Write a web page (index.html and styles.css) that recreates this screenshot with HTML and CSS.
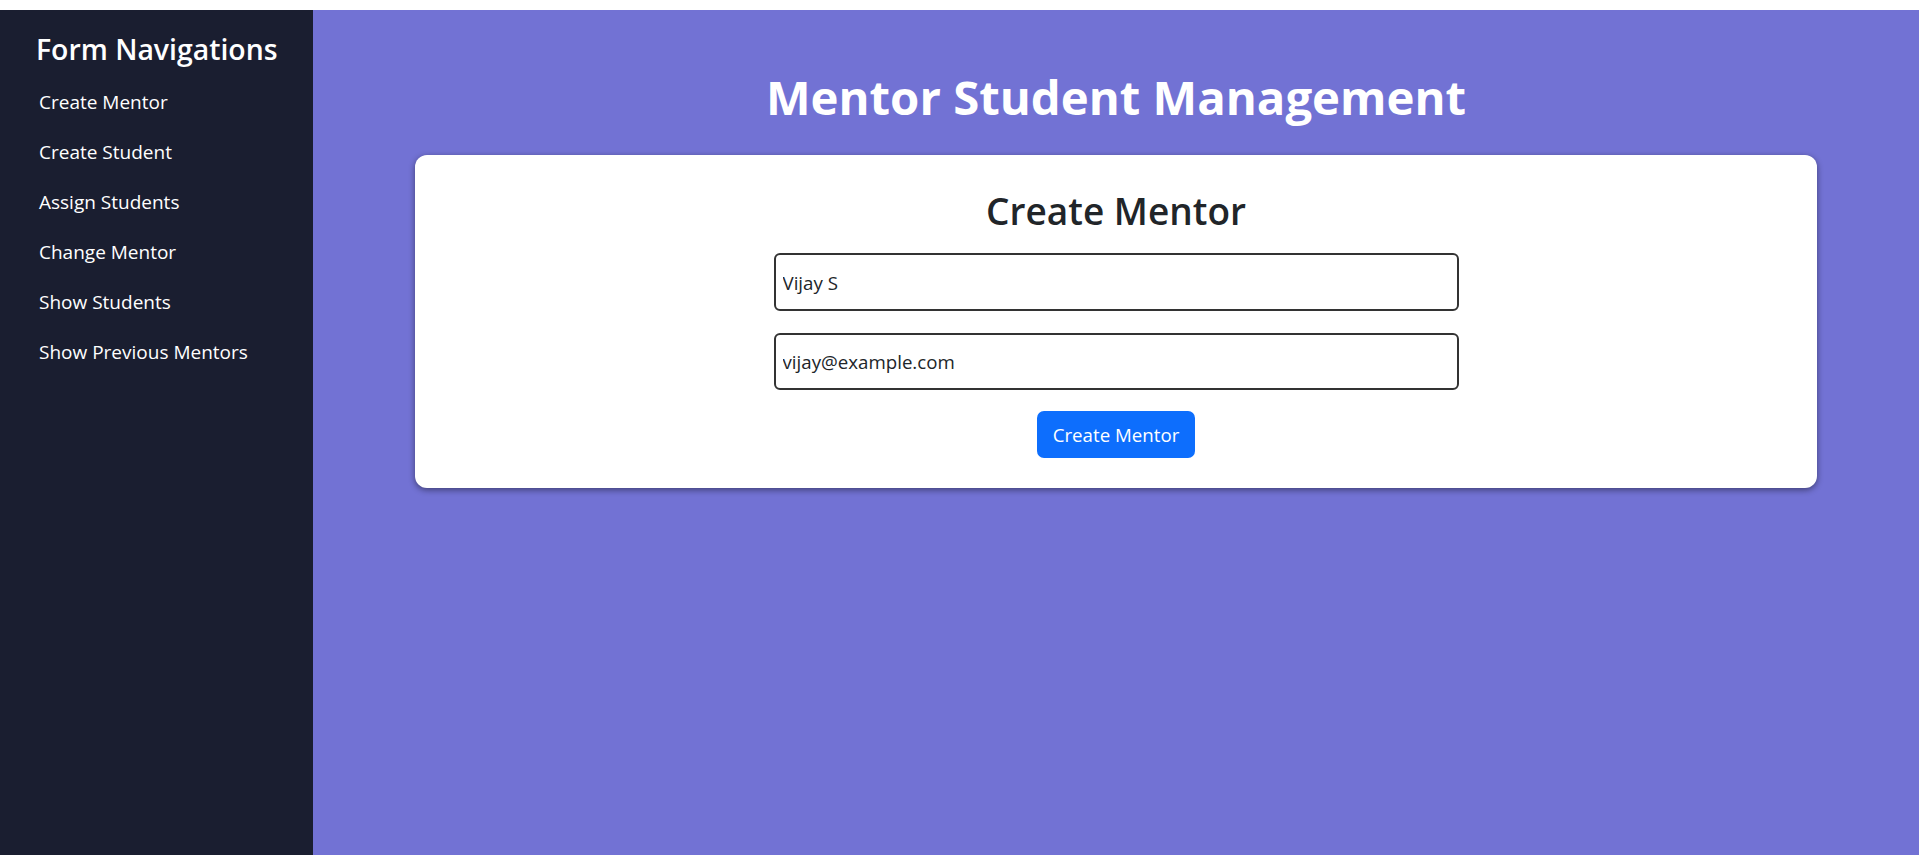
FILE: index.html
```html
<!DOCTYPE html>
<html lang="en">
<head>
<meta charset="utf-8">
<title>Mentor Student Management</title>
<link rel="stylesheet" href="styles.css">
</head>
<body>
<div class="app">
  <aside class="sidebar">
    <h3 class="sidebar-title">Form Navigations</h3>
    <nav class="nav">
      <a class="nav-link" href="#">Create Mentor</a>
      <a class="nav-link" href="#">Create Student</a>
      <a class="nav-link" href="#">Assign Students</a>
      <a class="nav-link" href="#">Change Mentor</a>
      <a class="nav-link" href="#">Show Students</a>
      <a class="nav-link" href="#">Show Previous Mentors</a>
    </nav>
  </aside>
  <main class="main">
    <h1 class="page-title">Mentor Student Management</h1>
    <section class="card">
      <h2 class="card-title">Create Mentor</h2>
      <form class="form">
        <input class="field" type="text" value="Vijay S">
        <input class="field" type="email" value="vijay@example.com">
        <button class="btn" type="button">Create Mentor</button>
      </form>
    </section>
  </main>
</div>
</body>
</html>
```

FILE: styles.css
```css
* { box-sizing: border-box; }

html, body {
  margin: 0;
  padding: 0;
  height: 100%;
}

body {
  background: #ffffff;
  font-family: "Open Sans", "Noto Sans", sans-serif;
  padding-top: 10px;
}

.app {
  display: flex;
  height: 845px;
}

.sidebar {
  width: 313px;
  flex: 0 0 313px;
  background: #1a1e30;
  padding: 19px 0 0 0;
  color: #ffffff;
}

.sidebar-title {
  margin: 0 0 8px 0;
  padding-left: 36px;
  font-size: 28.4px;
  font-weight: 600;
  line-height: 40px;
  color: #ffffff;
}

.nav {
  display: flex;
  flex-direction: column;
}

.nav-link {
  display: block;
  padding-left: 39px;
  font-size: 19px;
  line-height: 50px;
  color: #ffffff;
  text-decoration: none;
}

.main {
  flex: 1;
  background: #7272d4;
  display: flex;
  flex-direction: column;
  align-items: center;
  padding-top: 57px;
}

.page-title {
  margin: 0 0 29px 0;
  font-size: 47.3px;
  font-weight: 700;
  line-height: 59px;
  color: #ffffff;
  text-align: center;
}

.card {
  width: 1402px;
  background: #ffffff;
  border-radius: 12px;
  box-shadow: 0 2px 6px rgba(0, 0, 0, 0.45);
  padding: 33px 0 30px 0;
  display: flex;
  flex-direction: column;
  align-items: center;
}

.card-title {
  margin: 0 0 20px 0;
  font-size: 37px;
  font-weight: 600;
  line-height: 45px;
  color: #212529;
}

.form {
  display: flex;
  flex-direction: column;
  align-items: center;
  gap: 22px;
}

.field {
  width: 685px;
  height: 58px;
  border: 2px solid #333333;
  border-radius: 6px;
  padding: 0 7px;
  font-family: "Open Sans", "Noto Sans", sans-serif;
  font-size: 18.7px;
  color: #212529;
  background: #ffffff;
  outline: none;
}

.field + .field {
  height: 57px;
}

.btn {
  margin-top: -1px;
  height: 47px;
  padding: 0 16px;
  border: none;
  border-radius: 7px;
  background: #0d6efd;
  color: #ffffff;
  font-family: "Open Sans", "Noto Sans", sans-serif;
  font-size: 18.7px;
  line-height: 27px;
  cursor: pointer;
}
```
